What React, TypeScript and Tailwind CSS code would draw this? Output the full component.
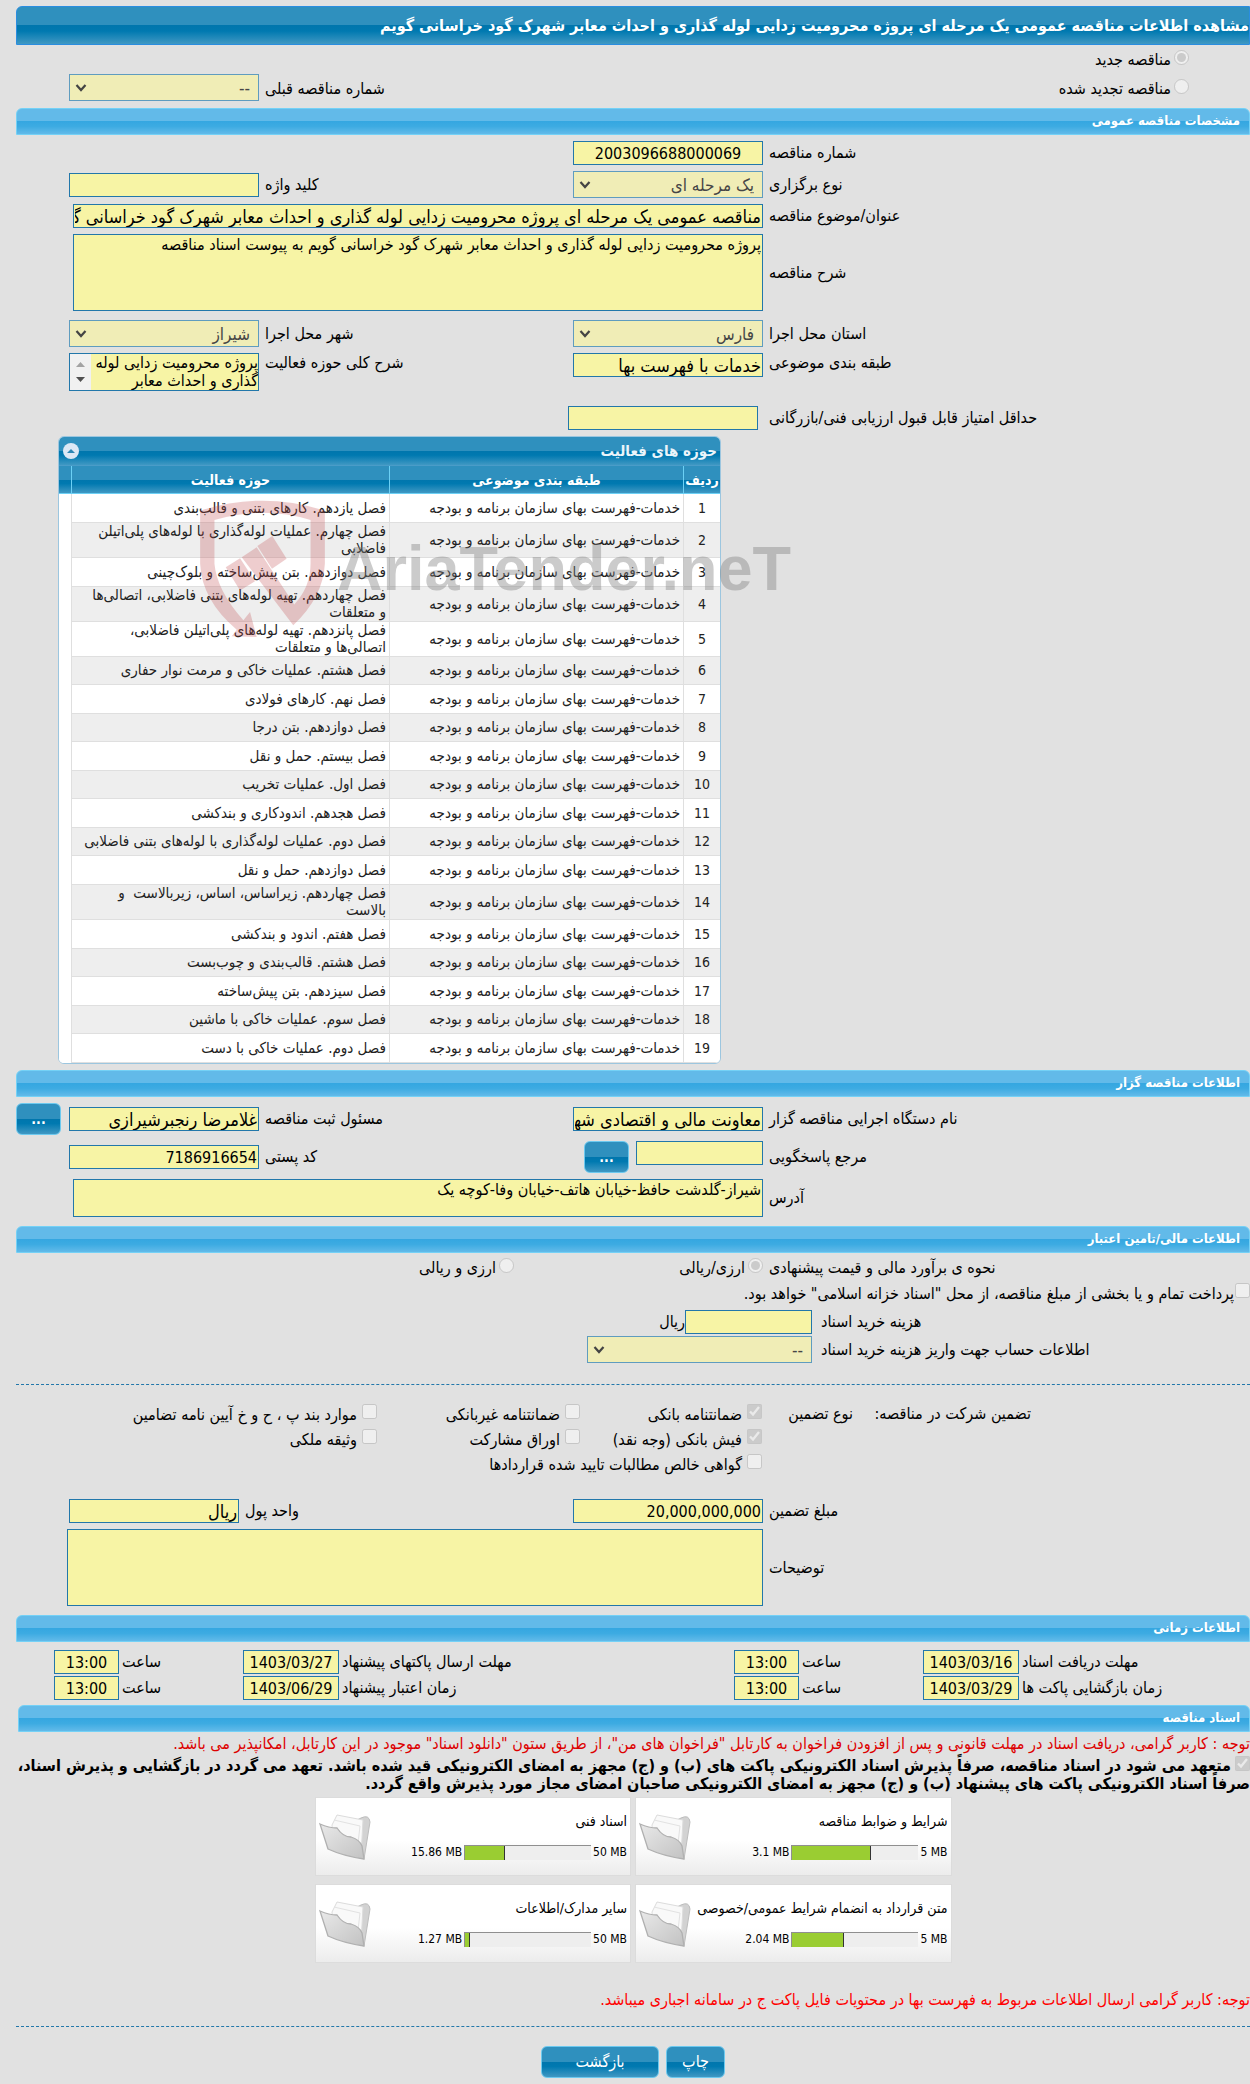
import type { ReactNode } from "react";

type ActivityRow = {
    category: string;
    field: string;
};

type DocumentCard = {
    title: string;
    used: string;
    limit: string;
    percent: number;
};

const CATEGORY = "خدمات-فهرست بهای سازمان برنامه و بودجه";

const activities: ActivityRow[] = [
    "فصل یازدهم. کارهای بتنی و قالب‌بندی",
    "فصل چهارم. عملیات لوله‌گذاری با لوله‌های پلی‌اتیلن\nفاضلابی",
    "فصل دوازدهم. بتن پیش‌ساخته و بلوک‌چینی",
    "فصل چهاردهم. تهیه لوله‌های بتنی فاضلابی، اتصالی‌ها\nو متعلقات",
    "فصل پانزدهم. تهیه لوله‌های پلی‌اتیلن فاضلابی،\nاتصالی‌ها و متعلقات",
    "فصل هشتم. عملیات خاکی و مرمت نوار حفاری",
    "فصل نهم. کارهای فولادی",
    "فصل دوازدهم. بتن درجا",
    "فصل بیستم. حمل و نقل",
    "فصل اول. عملیات تخریب",
    "فصل هجدهم. اندودکاری و بندکشی",
    "فصل دوم. عملیات لوله‌گذاری با لوله‌های بتنی فاضلابی",
    "فصل دوازدهم. حمل و نقل",
    "فصل چهاردهم. زیراساس، اساس، زیربالاست  و\nبالاست",
    "فصل هفتم. اندود و بندکشی",
    "فصل هشتم. قالب‌بندی و چوب‌بست",
    "فصل سیزدهم. بتن پیش‌ساخته",
    "فصل سوم. عملیات خاکی با ماشین",
    "فصل دوم. عملیات خاکی با دست",
].map((field) => ({ category: CATEGORY, field }));

const documents: DocumentCard[] = [
    { title: "شرایط و ضوابط مناقصه", used: "3.1 MB", limit: "5 MB", percent: 62 },
    { title: "اسناد فنی", used: "15.86 MB", limit: "50 MB", percent: 32 },
    { title: "متن قرارداد به انضمام شرایط عمومی/خصوصی", used: "2.04 MB", limit: "5 MB", percent: 41 },
    { title: "سایر مدارک/اطلاعات", used: "1.27 MB", limit: "50 MB", percent: 4 },
];

const darkBlue = "bg-[linear-gradient(#2f90be_0%,#2f90be_50%,#0076ad_50%,#0079b0_65%,#4098c3_100%)]";
const box = "block w-full border border-[#2277aa] bg-[#f7f4a5] px-px leading-5 text-black outline-none";
const row = "grid grid-cols-[487fr_190px_314fr_190px_53fr] items-center";
const wide = "col-span-3 pl-1";

function SectionBar({ children }: { children: ReactNode }) {
    return (
        <h2 className="h-[27px] rounded-t-md border border-[#74d1f6] bg-[linear-gradient(#62bae9_0%,#62bae9_48%,#35a7e1_50%,#3dabe2_70%,#62bae9_100%)] px-[9px] text-[13px] font-bold leading-[24px] text-white">
            {children}
        </h2>
    );
}

function Label({ htmlFor, children }: { htmlFor?: string; children: ReactNode }) {
    return (
        <label htmlFor={htmlFor} className="whitespace-nowrap pl-1.5 text-left">
            {children}
        </label>
    );
}

function TextInput({ id, value = "", className = "text-lg" }: { id: string; value?: string; className?: string }) {
    return <input id={id} type="text" readOnly value={value} className={`${box} h-6 ${className}`} />;
}

function Select({ id, value }: { id: string; value: string }) {
    return (
        <div className="relative w-full">
            <select
                id={id}
                disabled
                className="block h-[27px] w-full appearance-none border border-[#5f9cbf] bg-[#f0edb6] pr-2 pl-6 text-[17px] leading-5 text-[#464646] opacity-100"
            >
                <option>{value}</option>
            </select>
            <svg className="absolute left-1.5 top-2 h-3 w-3" viewBox="0 0 12 12" fill="none" stroke="#444" strokeWidth="2.2">
                <path d="M1.5 3 6 8l4.5-5" />
            </svg>
        </div>
    );
}

function Radio({ name, label, checked = false }: { name: string; label: string; checked?: boolean }) {
    return (
        <label className="flex items-center gap-[3px] whitespace-nowrap">
            <input type="radio" name={name} disabled defaultChecked={checked} className="mb-1.5 h-[15px] w-[15px]" />
            {label}
        </label>
    );
}

function Checkbox({ label, checked = false, className = "gap-[5px]" }: { label: string; checked?: boolean; className?: string }) {
    return (
        <label className={`flex h-[25px] items-center whitespace-nowrap ${className}`}>
            <input type="checkbox" disabled defaultChecked={checked} className="mb-1.5 h-[15px] w-[15px]" />
            {label}
        </label>
    );
}

function BlueButton({ children, className }: { children: ReactNode; className: string }) {
    return (
        <button
            type="button"
            className={`h-8 shrink-0 cursor-pointer rounded-md border border-[#6cc9ef] text-white ${darkBlue} ${className}`}
        >
            {children}
        </button>
    );
}

function Folder() {
    return (
        <svg className="mt-4 h-[47px] w-[52px] shrink-0" viewBox="0 0 52 47">
            <defs>
                <linearGradient id="folderFront" x1="0" y1="0" x2="1" y2="1">
                    <stop offset="0" stopColor="#e9e9e9" />
                    <stop offset="1" stopColor="#c2c2c2" />
                </linearGradient>
            </defs>
            <path d="M36 7 42 4q8-4 9 4l-6 37-6-3z" fill="#d2d2d2" stroke="#bdbdbd" />
            <path d="M13 11 18 1l26 5-2 36-28-14z" fill="#f9f9f9" stroke="#dcdcdc" />
            <path d="M15 6 41 12l-3 26" fill="none" stroke="#e2e2e2" />
            <path d="M1 10q9 4 17 4 6 9 14 9 9 3 11 9l2 13Q24 42 9 35z" fill="url(#folderFront)" stroke="#b0b0b0" strokeWidth="1.3" />
        </svg>
    );
}

function Watermark() {
    return (
        <div dir="ltr" className="pointer-events-none absolute left-[142px] top-16 flex items-start gap-3" aria-hidden="true">
            <svg className="h-[137px] w-[125px] shrink-0" viewBox="480 208 375 412" fill="#c24b4f" opacity="0.27">
                <path d="M480 240Q668 180 855 240V400Q850 500 760 585L605 380 650 350 763 522Q812 470 812 400V268Q668 225 523 268V400Q530 480 610 570L630 545 650 620 575 618 590 598Q485 510 480 400Z" />
                <path d="M557 410 600 383 645 452 600 480Z" />
                <path d="M652 346 697 316 740 385 696 415Z" />
            </svg>
            <span className="mt-7 font-['Liberation_Sans',sans-serif] text-[63px] font-bold leading-[80px] text-[#7d7d7d]/40">
                AriaTender.neT
            </span>
        </div>
    );
}

function ActivityTable() {
    const head = `h-7 border-b border-[#6cd0f5] p-0 text-sm font-bold text-white ${darkBlue}`;
    const cell = "border-b border-l border-[#dfdfdf] py-0 pr-[3px] pl-1";

    return (
        <div className="relative mt-1.5 mr-auto ml-[42px] w-[663px]">
            <div className="overflow-hidden rounded-md border border-[#9cc6df] bg-white">
                <div className={`flex h-[29px] items-center justify-between border-b border-[#4a9cc8] pr-[3px] pl-1 text-[15px] font-bold text-[#eaf4fa] ${darkBlue}`}>
                    <span>حوزه های فعالیت</span>
                    <button type="button" aria-label="بستن جدول" className="flex h-4 w-4 items-center justify-center rounded-full bg-[#dce8f5]">
                        <svg className="h-2 w-2" viewBox="0 0 8 8">
                            <path d="M0 6 4 2l4 4z" fill="#2c86b5" />
                        </svg>
                    </button>
                </div>
                <table className="w-full table-fixed border-separate border-spacing-0 text-[15px] leading-[17px] text-[#222]">
                    <colgroup>
                        <col className="w-[37px]" />
                        <col className="w-[294px]" />
                        <col />
                        <col className="w-3" />
                    </colgroup>
                    <thead>
                        <tr>
                            <th className={`${head} border-l`}>ردیف</th>
                            <th className={`${head} border-l`}>طبقه بندی موضوعی</th>
                            <th className={`${head} border-l`}>حوزه فعالیت</th>
                            <th className={head}></th>
                        </tr>
                    </thead>
                    <tbody>
                        {activities.map((item, i) => (
                            <tr key={i} className="h-7 odd:h-[29px] odd:bg-white even:bg-[#eee]">
                                <td className="border-b border-l border-[#dfdfdf] p-0 text-center text-sm leading-[17px]">{i + 1}</td>
                                <td className={cell}>{item.category}</td>
                                <td className={`${cell} whitespace-pre`}>{item.field}</td>
                                <td className="bg-white p-0"></td>
                            </tr>
                        ))}
                    </tbody>
                </table>
            </div>
            <Watermark />
        </div>
    );
}

function DeadlineRow({ items }: { items: [string, string, string][] }) {
    const label = "whitespace-nowrap pl-[3px] text-left";
    return (
        <div className="grid grid-cols-[231fr_96px_124fr_65px_395fr_96px_124fr_65px_38fr] items-center">
            {items.map(([title, date, time]) => (
                <div key={title} className="contents">
                    <label htmlFor={title} className={label}>{title}</label>
                    <TextInput id={title} value={date} className="text-center text-base" />
                    <label htmlFor={`${title}-time`} className={label}>ساعت</label>
                    <TextInput id={`${title}-time`} value={time} className="text-center text-base" />
                </div>
            ))}
        </div>
    );
}

function DocumentTile({ doc }: { doc: DocumentCard }) {
    return (
        <div className="flex h-[79px] justify-between border border-[#dcdcdc] bg-[linear-gradient(#fff_0%,#fff_55%,#ececec_100%)] pr-[3px] pl-[3px]">
            <div className="flex flex-col gap-[11px] pt-[13px]">
                <span className="whitespace-nowrap text-sm leading-5">{doc.title}</span>
                <div className="flex items-center gap-[2px] text-xs leading-5">
                    <span dir="ltr">{doc.limit}</span>
                    <div dir="ltr" className="h-[15px] w-[127px] border-t border-l border-[#8f8f8f] bg-[#eee]">
                        <div className="h-full border-r border-[#333] bg-[#9acd32]" style={{ width: `${doc.percent}%` }} />
                    </div>
                    <span dir="ltr">{doc.used}</span>
                </div>
            </div>
            <Folder />
        </div>
    );
}

export default function App() {
    return (
        <div
            dir="rtl"
            lang="fa"
            className="min-h-screen overflow-x-hidden bg-[#e1e1e1] pt-1.5 pb-1.5 pl-4 font-['DejaVu_Sans_Condensed','DejaVu_Sans',sans-serif] text-base leading-5 text-black"
        >
            <h1 className={`h-[39px] whitespace-nowrap rounded-tl-md border border-[#2a8de0] text-base font-bold leading-[37px] text-white ${darkBlue}`}>
                مشاهده اطلاعات مناقصه عمومی یک مرحله ای پروژه محرومیت زدایی لوله گذاری و احداث معابر شهرک گود خراسانی گویم
            </h1>

            <div className={`${row} h-[63px]`}>
                <div className="flex flex-col gap-2 pr-[61px] pb-1">
                    <Radio name="kind" label="مناقصه جدید" checked />
                    <Radio name="kind" label="مناقصه تجدید شده" />
                </div>
                <div></div>
                <div className="self-end pb-[9px] text-left">
                    <Label htmlFor="prev">شماره مناقصه قبلی</Label>
                </div>
                <div className="self-end pb-[7px]">
                    <Select id="prev" value="--" />
                </div>
            </div>

            <SectionBar>مشخصات مناقصه عمومی</SectionBar>
            <div className="mt-1.5 flex flex-col gap-1.5">
                <div className={row}>
                    <Label htmlFor="number">شماره مناقصه</Label>
                    <TextInput id="number" value="2003096688000069" className="text-center text-base" />
                </div>
                <div className={row}>
                    <Label htmlFor="type">نوع برگزاری</Label>
                    <Select id="type" value="یک مرحله ای" />
                    <Label htmlFor="keyword">کلید واژه</Label>
                    <TextInput id="keyword" />
                </div>
                <div className={row}>
                    <Label htmlFor="subject">عنوان/موضوع مناقصه</Label>
                    <div className={wide}>
                        <TextInput
                            id="subject"
                            value="مناقصه عمومی یک مرحله ای پروژه محرومیت زدایی لوله گذاری و احداث معابر شهرک گود خراسانی گویم"
                        />
                    </div>
                </div>
                <div className={row}>
                    <Label htmlFor="description">شرح مناقصه</Label>
                    <div className={wide}>
                        <textarea
                            id="description"
                            readOnly
                            value="پروژه محرومیت زدایی لوله گذاری و احداث معابر شهرک گود خراسانی گویم به پیوست اسناد مناقصه"
                            className={`${box} h-[77px] resize-none`}
                        />
                    </div>
                </div>
                <div className={`${row} mt-[3px]`}>
                    <Label htmlFor="province">استان محل اجرا</Label>
                    <Select id="province" value="فارس" />
                    <Label htmlFor="city">شهر محل اجرا</Label>
                    <Select id="city" value="شیراز" />
                </div>
                <div className={`${row} !items-start`}>
                    <Label htmlFor="class">طبقه بندی موضوعی</Label>
                    <TextInput id="class" value="خدمات با فهرست بها" />
                    <Label htmlFor="scope">شرح کلی حوزه فعالیت</Label>
                    <div className="flex h-[38px] border border-[#2277aa] bg-[#f7f4a5]">
                        <textarea
                            id="scope"
                            readOnly
                            value={"پروژه محرومیت زدایی لوله\nگذاری و احداث معابر"}
                            className="block h-full min-w-0 flex-1 resize-none overflow-hidden whitespace-pre leading-[18px] outline-none"
                        />
                        <div className="flex w-[21px] flex-col items-center justify-between bg-[#f1f1f1] py-2">
                            <svg className="h-[5px] w-[9px]" viewBox="0 0 9 5"><path d="M0 5 4.5 0 9 5z" fill="#a3a3a3" /></svg>
                            <svg className="h-[5px] w-[9px]" viewBox="0 0 9 5"><path d="M0 0 4.5 5 9 0z" fill="#505050" /></svg>
                        </div>
                    </div>
                </div>
                <div className={`${row} mt-[9px]`}>
                    <Label htmlFor="score">حداقل امتیاز قابل قبول ارزیابی فنی/بازرگانی</Label>
                    <div className="-ml-[5px] pr-[5px]">
                        <TextInput id="score" />
                    </div>
                </div>
            </div>

            <ActivityTable />

            <div className="mt-1.5">
                <SectionBar>اطلاعات مناقصه گزار</SectionBar>
            </div>
            <div className="mt-1.5 flex flex-col gap-1.5">
                <div className={row}>
                    <Label htmlFor="agency">نام دستگاه اجرایی مناقصه گزار</Label>
                    <TextInput id="agency" value="معاونت مالی و اقتصادی شهرداری شیراز" />
                    <Label htmlFor="officer">مسئول ثبت مناقصه</Label>
                    <TextInput id="officer" value="غلامرضا رنجبرشیرازی" />
                    <BlueButton className="w-[45px] justify-self-end text-sm font-bold">...</BlueButton>
                </div>
                <div className={row}>
                    <Label htmlFor="contact">مرجع پاسخگویی</Label>
                    <div className="flex gap-[7px]">
                        <div className="w-[127px]">
                            <TextInput id="contact" />
                        </div>
                        <BlueButton className="w-[45px] text-sm font-bold">...</BlueButton>
                    </div>
                    <Label htmlFor="postal">کد پستی</Label>
                    <TextInput id="postal" value="7186916654" className="text-base" />
                </div>
                <div className={row}>
                    <Label htmlFor="address">آدرس</Label>
                    <div className={wide}>
                        <textarea
                            id="address"
                            readOnly
                            value="شیراز-گلدشت حافظ-خیابان هاتف-خیابان وفا-کوچه یک"
                            className={`${box} h-[38px] resize-none`}
                        />
                    </div>
                </div>
            </div>

            <div className="mt-[9px]">
                <SectionBar>اطلاعات مالی/تامین اعتبار</SectionBar>
            </div>
            <div className={`${row} mt-1 h-[22px]`}>
                <span className="whitespace-nowrap pl-1.5 text-left">نحوه ی برآورد مالی و قیمت پیشنهادی</span>
                <Radio name="currency" label="ارزی/ریالی" checked />
                <div className="pr-[59px]">
                    <Radio name="currency" label="ارزی و ریالی" />
                </div>
            </div>
            <Checkbox
                label={"پرداخت تمام و یا بخشی از مبلغ مناقصه، از محل \"اسناد خزانه اسلامی\" خواهد بود."}
                className="mt-0.5 gap-px"
            />
            <div className="mt-1 grid grid-cols-[438fr_796fr] items-center gap-y-0.5">
                <div className="pl-[3px] text-left">
                    <Label htmlFor="cost">هزینه خرید اسناد</Label>
                </div>
                <div className="flex items-center">
                    <div className="w-[127px]">
                        <TextInput id="cost" />
                    </div>
                    ریال
                </div>
                <div className="pl-[3px] text-left">
                    <Label htmlFor="account">اطلاعات حساب جهت واریز هزینه خرید اسناد</Label>
                </div>
                <div className="w-[225px]">
                    <Select id="account" value="--" />
                </div>
            </div>

            <hr className="mt-[21px] border-t border-dashed border-[#2277aa]" />

            {/* Guarantee kinds */}
            <div className="mt-[17px] grid grid-cols-[178fr_91fr_182fr_203fr_361fr] pr-[219px]">
                <span className="whitespace-nowrap leading-6">تضمین شرکت در مناقصه:</span>
                <span className="whitespace-nowrap leading-6">نوع تضمین</span>
                <Checkbox label="ضمانتنامه بانکی" checked />
                <Checkbox label="ضمانتنامه غیربانکی" />
                <Checkbox label="موارد بند پ ، ح و خ آیین نامه تضامین" />
                <Checkbox label="فیش بانکی (وجه نقد)" checked className="col-start-3 gap-[5px]" />
                <Checkbox label="اوراق مشارکت" />
                <Checkbox label="وثیقه ملکی" />
                <Checkbox label="گواهی خالص مطالبات تایید شده قراردادها" className="col-span-3 col-start-3 gap-[5px]" />
            </div>

            <div className="mt-[22px] grid grid-cols-[487fr_190px_334fr_170px_53fr] items-center">
                <Label htmlFor="amount">مبلغ تضمین</Label>
                <TextInput id="amount" value="20,000,000,000" className="text-base" />
                <Label htmlFor="unit">واحد پول</Label>
                <TextInput id="unit" value="ریال" />
            </div>
            <div className="mt-1.5 grid grid-cols-[487fr_696fr_51fr] items-center">
                <Label htmlFor="notes">توضیحات</Label>
                <textarea id="notes" readOnly className={`${box} h-[77px] resize-none`} />
            </div>

            <div className="mt-[9px]">
                <SectionBar>اطلاعات زمانی</SectionBar>
            </div>
            <div className="mt-2 flex flex-col gap-0.5">
                <DeadlineRow
                    items={[
                        ["مهلت دریافت اسناد", "1403/03/16", "13:00"],
                        ["مهلت ارسال پاکتهای پیشنهاد", "1403/03/27", "13:00"],
                    ]}
                />
                <DeadlineRow
                    items={[
                        ["زمان بازگشایی پاکت ها", "1403/03/29", "13:00"],
                        ["زمان اعتبار پیشنهاد", "1403/06/29", "13:00"],
                    ]}
                />
            </div>

            <div className="mt-[5px] ml-0.5">
                <SectionBar>اسناد مناقصه</SectionBar>
            </div>
            <p className="mt-0.5 whitespace-nowrap text-[#dd0000]">
                توجه : کاربر گرامی، دریافت اسناد در مهلت قانونی و پس از افزودن فراخوان به کارتابل "فراخوان های من"، از طریق ستون "دانلود اسناد" موجود در این کارتابل، امکانپذیر می باشد.
            </p>
            <label className="mt-0.5 block whitespace-nowrap font-bold leading-[18px]">
                <input type="checkbox" disabled defaultChecked className="ml-1 h-[15px] w-[15px]" />
                متعهد می شود در اسناد مناقصه، صرفاً پذیرش اسناد الکترونیکی پاکت های (ب) و (ج) مجهز به امضای الکترونیکی قید شده باشد. تعهد می گردد در بازگشایی و پذیرش اسناد،
                <br />
                صرفاً اسناد الکترونیکی پاکت های پیشنهاد (ب) و (ج) مجهز به امضای الکترونیکی صاحبان امضای مجاز مورد پذیرش واقع گردد.
            </label>

            <div className="mx-auto mt-1 grid w-[637px] grid-cols-2 gap-x-1 gap-y-2">
                {documents.map((doc) => (
                    <DocumentTile key={doc.title} doc={doc} />
                ))}
            </div>

            <p className="mt-[27px] whitespace-nowrap text-[#ff0000]">
                توجه: کاربر گرامی ارسال اطلاعات مربوط به فهرست بها در محتویات فایل پاکت ج در سامانه اجباری میباشد.
            </p>
            <hr className="mt-4 border-t border-dashed border-[#2277aa]" />

            <div className="mt-[19px] flex justify-center gap-[7px]">
                <BlueButton className="w-[59px]">چاپ</BlueButton>
                <BlueButton className="w-[118px]">بازگشت</BlueButton>
            </div>
        </div>
    );
}
